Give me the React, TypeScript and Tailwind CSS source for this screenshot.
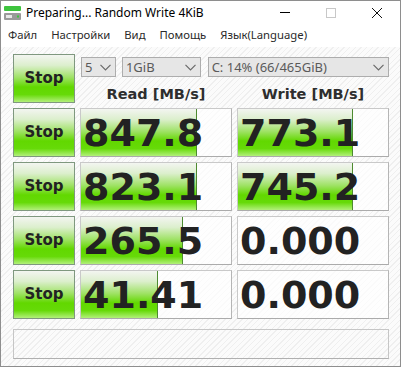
import React from "react";

const rows = [
  { read: "847.8", readFill: 116, write: "773.1", writeFill: 115 },
  { read: "823.1", readFill: 116, write: "745.2", writeFill: 115 },
  { read: "265.5", readFill: 102, write: "0.000", writeFill: 0 },
  { read: "41.41", readFill: 77, write: "0.000", writeFill: 0 },
];

const green =
  "bg-[linear-gradient(to_bottom,#f3f5f1_0%,#dcefcd_22%,#9ee264_48%,#62d800_68%,#66da08_84%,#b2f07a_100%)]";

function StopButton() {
  return (
    <div
      className={`w-[62px] h-[49px] border border-[#7f987f] ${green} flex items-center justify-center text-[15px] font-bold text-[#222] font-['DejaVu_Sans',sans-serif]`}
    >
      Stop
    </div>
  );
}

function Bar({ value, fill }: { value: string; fill: number }) {
  return (
    <div className="relative h-[49px] border border-[#c9c9c9] border-b-[#ababab] border-r-[#b5b5b5] bg-white/70 overflow-hidden">
      {fill > 0 && (
        <div
          className={`absolute left-0 top-0 bottom-0 border-r border-[#4d8a30] ${green}`}
          style={{ width: fill }}
        />
      )}
      <div className="relative h-full flex items-center pl-[2px] text-[38px] leading-none font-bold text-[#222] font-['DejaVu_Sans',sans-serif]">
        {value}
      </div>
    </div>
  );
}

function Select({ label, width }: { label: string; width: string }) {
  return (
    <div
      className={`${width} h-[20px] border border-[#adadad] bg-[#e6e6e6] flex items-center justify-between pl-[3px] pr-[4px] text-[13px] text-[#5a5a5a] font-['Noto_Sans',sans-serif]`}
    >
      <span className="leading-none">{label}</span>
      <svg width="11" height="7" viewBox="0 0 11 7" fill="none">
        <path d="M0.5 0.8 L5.5 5.8 L10.5 0.8" stroke="#6a6a6a" strokeWidth="1.2" />
      </svg>
    </div>
  );
}

export default function App() {
  return (
    <div className="w-[401px] h-[367px] border border-[#8e8e8e] flex flex-col bg-[repeating-linear-gradient(135deg,#fbfbfb_0px,#fbfbfb_3px,#efefef_3px,#efefef_4px)] font-['Noto_Sans',sans-serif] overflow-hidden">
      {/* title bar */}
      <div className="h-[23px] bg-white flex items-center shrink-0">
        <svg width="20" height="16" viewBox="0 0 20 16" className="ml-[2px]">
          <rect x="1" y="1" width="17" height="5" rx="1" fill="#3ec43e" />
          <rect x="1" y="8" width="17" height="7" rx="1" fill="#9a9a9a" />
          <rect x="3" y="10" width="6" height="3" fill="#e8e8e8" />
          <rect x="14" y="10.5" width="2" height="2" fill="#3ec43e" />
        </svg>
        <span className="ml-[3px] text-[12px] text-black leading-none">Preparing... Random Write 4KiB</span>
        <div className="ml-auto flex items-center h-full">
          <div className="w-[46px] h-full flex items-center justify-center">
            <div className="w-[10px] h-px bg-black" />
          </div>
          <div className="w-[46px] h-full flex items-center justify-center">
            <div className="w-[10px] h-[10px] border border-[#c8c8c8]" />
          </div>
          <div className="w-[46px] h-full flex items-center justify-center">
            <svg width="10" height="10" viewBox="0 0 10 10">
              <path d="M0 0 L10 10 M10 0 L0 10" stroke="#111" strokeWidth="1" />
            </svg>
          </div>
        </div>
      </div>

      {/* menu */}
      <div className="h-[23px] bg-white flex items-center gap-[14px] pl-[7px] text-[11.3px] text-[#2a2a2a] shrink-0">
        <span>Файл</span>
        <span>Настройки</span>
        <span>Вид</span>
        <span>Помощь</span>
        <span>Язык(Language)</span>
      </div>

      {/* main */}
      <div className="pl-[12px] pt-[7px] grid grid-cols-[62px_152px_152px] gap-x-[5px] gap-y-[5px]">
        <StopButton />
        <div className="col-span-2 flex flex-col">
          <div className="flex gap-[6px] mt-[3px] ml-px">
            <Select label="5" width="w-[35px]" />
            <Select label="1GiB" width="w-[79px]" />
            <Select label="C: 14% (66/465GiB)" width="w-[182px] ml-px" />
          </div>
          <div className="grid grid-cols-[152px_152px] gap-x-[5px] mt-[10px] text-[14.5px] font-bold text-[#2e2e2e] font-['DejaVu_Sans',sans-serif] leading-none">
            <div className="text-center">Read [MB/s]</div>
            <div className="text-center">Write [MB/s]</div>
          </div>
        </div>

        {rows.map((r, i) => (
          <React.Fragment key={i}>
            <StopButton />
            <Bar value={r.read} fill={r.readFill} />
            <Bar value={r.write} fill={r.writeFill} />
          </React.Fragment>
        ))}

        <div className="col-span-3 h-[30px] mt-[5px] border border-[#c6c6c6] border-b-[#b0b0b0]" />
      </div>
    </div>
  );
}
